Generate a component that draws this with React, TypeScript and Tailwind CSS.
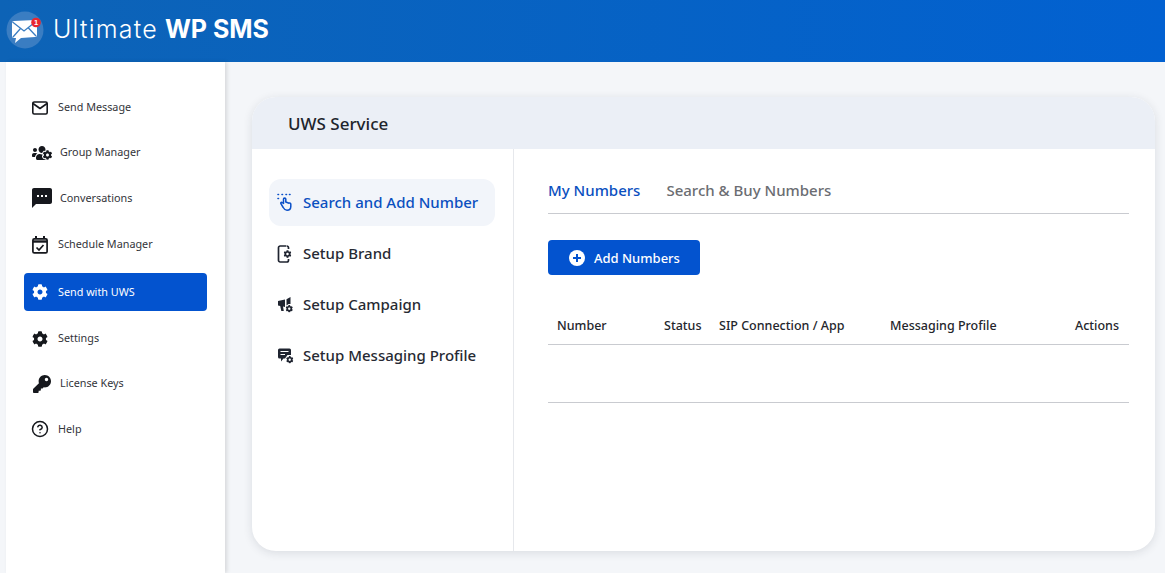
import React from 'react';
import { FaCog, FaKey, FaUsersCog } from 'react-icons/fa';
import { MdSms } from 'react-icons/md';
import { CircleHelp } from 'lucide-react';

const Logo = () => (
  <svg width="40" height="40" viewBox="0 0 40 40" className="shrink-0">
    <circle cx="20" cy="20" r="18.5" fill="#3a7dc2" />
    <path d="M7 13 Q7 11 9 11 L30 10 Q32 10 32 12 L32 25 Q32 27 30 27 L16 28 L10 33 L11 28 L9 28 Q7 28 7 26 Z" fill="#fff" />
    <path d="M7.500 12 L19 21 L31.500 11 M8 27 L15.500 18.500 M31 26 L23 17.500" fill="none" stroke="#3a7dc2" strokeWidth="1.300" />
    <circle cx="31" cy="12.500" r="4.800" fill="#e8262f" />
    <text x="31" y="15.300" textAnchor="middle" fontSize="7.500" fontWeight="700" fill="#fff" fontFamily="Liberation Sans">1</text>
  </svg>
);

const MailIcon = () => (
  <svg width="16" height="14" viewBox="0 0 16 14" fill="none" stroke="currentColor" strokeWidth="1.600" strokeLinejoin="round">
    <rect x="0.800" y="1" width="14.400" height="12" rx="1.400" />
    <path d="M1 2.500 8 7.500 15 2.500" />
  </svg>
);

const CalendarIcon = () => (
  <svg width="16" height="18" viewBox="0 0 16 18" fill="none" stroke="currentColor" strokeWidth="1.700">
    <rect x="0.900" y="2.900" width="14.200" height="14" rx="1.400" />
    <path d="M4 0v3M12 0v3" strokeWidth="2" />
    <path d="M1 5.500h14" strokeWidth="2.400" />
    <path d="M4.500 11.500 7 14l4.500-5" />
  </svg>
);

const HandIcon = () => (
  <svg width="16" height="19" viewBox="0 0 16 19" fill="none" stroke="#0b50c8" strokeWidth="1.500" strokeLinecap="round" strokeLinejoin="round">
    <path d="M1 1.500h.5M5 1.500h.5M9 1.500h.5M12.500 1.500h.5M1 5.500h.5" strokeWidth="1.600" />
    <path d="M6.500 10.500 5 9.500c-.8-.5-1.600.3-1.100 1.100l2.300 3.900c.8 1.500 2 2.700 3.800 2.700 2.300 0 3.800-1.500 3.800-3.800v-2.300c0-.9-1-1.300-1.700-.9L8.800 9V6c0-1.300-2.300-1.300-2.300 0Z" />
  </svg>
);

const BrandIcon = () => (
  <svg width="16" height="18" viewBox="0 0 16 18" fill="none">
    <path d="M9 1H3.200A1.700 1.700 0 0 0 1.500 2.700v12.600A1.700 1.700 0 0 0 3.200 17h6.600a1.700 1.700 0 0 0 1.700-1.700V14" stroke="#1f2430" strokeWidth="1.700" />
    <path d="M9.500 1h.3a1.700 1.700 0 0 1 1.700 1.700V4" stroke="#1f2430" strokeWidth="1.700" />
    <FaCog x={6.500} y={5} size={8} color="#1f2430" />
  </svg>
);

const CampaignIcon = () => (
  <svg width="18" height="18" viewBox="0 0 18 18">
    <path d="M1 5 8 3.500V11L6 10.500 6.800 15H4.300L3.200 10 1 9.500Z" fill="#1f2430" />
    <path d="M9.500 3.200 13.500 1V8H11.500L9.500 9.500Z" fill="#1f2430" />
    <FaCog x={8.500} y={9} size={7.500} color="#1f2430" />
  </svg>
);

const ProfileIcon = () => (
  <svg width="18" height="18" viewBox="0 0 18 18">
    <path d="M2.500 1.500h10A1.500 1.500 0 0 1 14 3v5h-3.500L8 11.500H6.500L4 14.500V11.500H2.500A1.500 1.500 0 0 1 1 10V3A1.500 1.500 0 0 1 2.500 1.500Z" fill="#1f2430" />
    <path d="M3.500 4.500h8M3.500 7.500h4.500" stroke="#fff" strokeWidth="1.200" />
    <FaCog x={9} y={9} size={7.500} color="#1f2430" />
  </svg>
);

const navItems = [
  { label: 'Send Message', icon: <MailIcon />, box: 'h-[45px]', iconW: 'w-[16px]', textMl: 'ml-[10px]' },
  { label: 'Group Manager', icon: <FaUsersCog size={20} />, box: 'h-[45px]', iconW: 'w-[20px]', textMl: 'ml-[8px]' },
  { label: 'Conversations', icon: <MdSms size={24} />, box: 'h-[46px]', iconW: 'w-[20px]', textMl: 'ml-[8px]' },
  { label: 'Schedule Manager', icon: <CalendarIcon />, box: 'h-[47px]', iconW: 'w-[16px]', textMl: 'ml-[10px]' },
  { label: 'Send with UWS', icon: <FaCog size={16} />, box: 'mt-[5px] h-[38px]', iconW: 'w-[16px]', textMl: 'ml-[10px]', active: true },
  { label: 'Settings', icon: <FaCog size={16} />, box: 'mt-[5px] h-[45px]', iconW: 'w-[16px]', textMl: 'ml-[10px]' },
  { label: 'License Keys', icon: <FaKey size={18} />, box: 'h-[45px]', iconW: 'w-[20px]', textMl: 'ml-[8px]' },
  { label: 'Help', icon: <CircleHelp size={18} strokeWidth={2} />, box: 'h-[46px]', iconW: 'w-[16px]', textMl: 'ml-[10px]' },
];

const serviceItems = [
  { label: 'Search and Add Number', icon: <HandIcon />, active: true },
  { label: 'Setup Brand', icon: <BrandIcon /> },
  { label: 'Setup Campaign', icon: <CampaignIcon /> },
  { label: 'Setup Messaging Profile', icon: <ProfileIcon /> },
];

export default function App() {
  return (
    <div className="h-[573px] w-[1165px] overflow-hidden bg-[#f4f6f9] font-['Noto_Sans','Open_Sans',sans-serif]">
      <header className="flex h-[62px] items-center bg-gradient-to-r from-[#0d63b6] to-[#0261d1] pb-[3px] pl-[5px]">
        <Logo />
        <span className="ml-[8px] font-['Inter',sans-serif] text-[25px] leading-none font-light tracking-[1.200px] text-white">Ultimate</span>
        <span className="ml-[7px] font-['Inter',sans-serif] text-[25px] leading-none font-bold text-white">WP SMS</span>
      </header>

      <div className="flex h-[511px]">
        <aside className="ml-[6px] h-full w-[219px] shrink-0 bg-white pt-[23px] pl-[18px] shadow-[2px_0_4px_rgba(0,0,0,0.12)]">
          <nav className="flex w-[183px] flex-col">
            {navItems.map(item => (
              <div
                key={item.label}
                className={`flex items-center rounded-[4px] pl-[8px] text-[10.800px] ${item.box} ${
                  item.active ? 'bg-[#0353cf] text-white' : 'text-[#33343a]'
                }`}
              >
                <span className={`flex items-center justify-center [&>svg]:shrink-0 ${item.iconW} ${item.active ? 'text-white' : 'text-[#16181d]'}`}>
                  {item.icon}
                </span>
                <span className={item.textMl}>{item.label}</span>
              </div>
            ))}
          </nav>
        </aside>

        <main className="flex-1 pt-[35px] pl-[27px]">
          <section className="flex h-[454px] w-[903px] flex-col overflow-hidden rounded-[24px] bg-white shadow-[0_2px_10px_rgba(30,40,60,0.12)]">
            <div className="flex h-[52px] shrink-0 items-center bg-[#ebeff6] pt-[2px] pl-[36px] text-[17px] font-medium text-[#20242c]">
              UWS Service
            </div>
            <div className="flex flex-1">
              <div className="w-[262px] shrink-0 border-r border-[#e6e8ec] pt-[30px] pl-[17px]">
                <div className="flex w-[226px] flex-col gap-[4px]">
                  {serviceItems.map(item => (
                    <div
                      key={item.label}
                      className={`flex h-[47px] items-center rounded-[12px] pl-[8px] text-[15px] font-medium ${
                        item.active ? 'bg-[#f2f5fa] text-[#0b50c0]' : 'text-[#272a33]'
                      }`}
                    >
                      <span className="flex w-[18px] justify-start [&>svg]:shrink-0">{item.icon}</span>
                      <span className="ml-[8px]">{item.label}</span>
                    </div>
                  ))}
                </div>
              </div>

              <div className="flex-1 pt-[29px] pr-[26px] pl-[34px]">
                <div className="flex h-[36px] gap-[26px] border-b border-[#c9cbd0] text-[15px] leading-[24px] font-medium">
                  <span className="text-[#0b50c0]">My Numbers</span>
                  <span className="text-[#6b6d72]">Search &amp; Buy Numbers</span>
                </div>
                <button className="mt-[26px] flex h-[35px] w-[152px] items-center rounded-[4px] bg-[#0353cf] pl-[21px] text-[13px] text-white">
                  <svg width="16" height="16" viewBox="0 0 16 16">
                    <circle cx="8" cy="8" r="8" fill="#fff" />
                    <path d="M8 4v8M4 8h8" stroke="#0353cf" strokeWidth="2" />
                  </svg>
                  <span className="ml-[9px] pt-[2px] font-medium">Add Numbers</span>
                </button>
                <table className="mt-[31px] w-full table-fixed text-[12.500px] font-medium text-[#24262c]">
                  <thead>
                    <tr className="h-[38px] border-b border-[#c9cbd0] text-left">
                      <th className="w-[116px] pt-[3px] pl-[9px] font-medium">Number</th>
                      <th className="w-[55px] pt-[3px] font-medium">Status</th>
                      <th className="w-[171px] pt-[3px] font-medium">SIP Connection / App</th>
                      <th className="pt-[3px] font-medium">Messaging Profile</th>
                      <th className="w-[60px] pt-[3px] pr-[10px] text-right font-medium">Actions</th>
                    </tr>
                  </thead>
                  <tbody>
                    <tr className="h-[58px] border-b border-[#c9cbd0]">
                      <td colSpan={5} />
                    </tr>
                  </tbody>
                </table>
              </div>
            </div>
          </section>
        </main>
      </div>
    </div>
  );
}
